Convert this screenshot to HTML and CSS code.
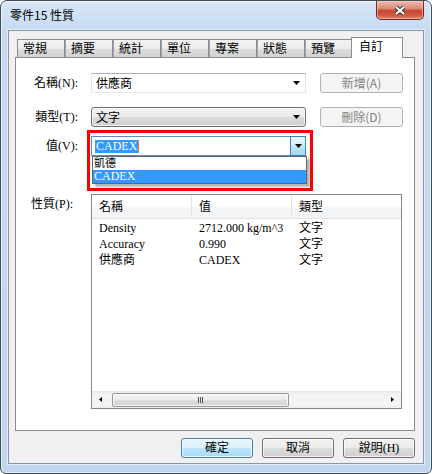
FILE: index.html
```html
<!DOCTYPE html>
<html lang="zh-Hant">
<head>
<meta charset="utf-8">
<title>零件15 性質</title>
<link rel="stylesheet" href="styles.css">
</head>
<body>
<div class="window">
  <div class="titlebar">
    <span class="title">零件15 性質</span>
    <div class="close">
      <svg width="14" height="11" viewBox="0 0 14 11"><path d="M3 2l8 7M11 2l-8 7" stroke="#3f3f3f" stroke-width="4.2" fill="none"/><path d="M3 2l8 7M11 2l-8 7" stroke="#fff" stroke-width="2" fill="none"/></svg>
    </div>
  </div>
  <div class="client">
    <div class="tabs">
      <div class="tab">常規</div>
      <div class="tab">摘要</div>
      <div class="tab">統計</div>
      <div class="tab">單位</div>
      <div class="tab">專案</div>
      <div class="tab">狀態</div>
      <div class="tab">預覽</div>
      <div class="tab active">自訂</div>
    </div>
    <div class="panel">
      <div class="row r1">
        <span class="lbl">名稱(N):</span>
        <div class="combo edit"><span class="ctext">供應商</span><svg class="arr" width="7" height="4" viewBox="0 0 7 4"><path d="M0 0h7L3.5 4z"/></svg></div>
        <div class="btn disabled">新增(A)</div>
      </div>
      <div class="row r2">
        <span class="lbl">類型(T):</span>
        <div class="combo list"><span class="ctext">文字</span><svg class="arr" width="7" height="4" viewBox="0 0 7 4"><path d="M0 0h7L3.5 4z"/></svg></div>
        <div class="btn disabled">刪除(D)</div>
      </div>
      <div class="row r3">
        <span class="lbl">值(V):</span>
        <div class="combo focus">
          <span class="sel">CADEX</span><span class="caret"></span>
          <div class="dbtn"><svg width="7" height="4" viewBox="0 0 7 4"><path d="M0 0h7L3.5 4z"/></svg></div>
          <div class="dropdown">
            <div class="item cjk">凱德</div>
            <div class="item hl">CADEX</div>
          </div>
        </div>
        <div class="redbox"></div>
      </div>
      <div class="props">
        <span class="plbl">性質(P):</span>
        <div class="listview">
          <div class="lvhead">
            <div class="hc">名稱</div>
            <div class="hc">值</div>
            <div class="hc last">類型</div>
          </div>
          <div class="lvbody">
            <div class="lvrow"><span>Density</span><span>2712.000 kg/m^3</span><span>文字</span></div>
            <div class="lvrow"><span>Accuracy</span><span>0.990</span><span>文字</span></div>
            <div class="lvrow"><span>供應商</span><span>CADEX</span><span>文字</span></div>
          </div>
          <div class="hscroll">
            <div class="sarrow"><svg width="3" height="5" viewBox="0 0 3 5"><path d="M3 0v5L0 2.5z"/></svg></div>
            <div class="strack">
              <div class="thumb"><span class="grip"></span><span class="grip"></span><span class="grip"></span></div>
            </div>
            <div class="sarrow"><svg width="3" height="5" viewBox="0 0 3 5"><path d="M0 0v5L3 2.5z"/></svg></div>
          </div>
        </div>
      </div>
    </div>
    <div class="footer">
      <div class="pbtn default">確定</div>
      <div class="pbtn">取消</div>
      <div class="pbtn">說明(H)</div>
    </div>
  </div>
</div>
</body>
</html>
```
FILE: styles.css
```css
* { box-sizing: border-box; }
html, body { margin: 0; padding: 0; }
body {
  width: 432px; height: 474px; overflow: hidden; background: #fff;
  font-family: "Liberation Serif", "Noto Sans CJK TC", serif;
  font-size: 12px; color: #000;
}
.window {
  width: 432px; height: 474px;
  border: 1px solid #424b57;
  border-radius: 7px 7px 6px 6px;
  background: linear-gradient(180deg, #d9e7f7 0, #c5daf2 30px, #c0d6f0 100%);
  box-shadow: inset 0 0 0 1px rgba(255,255,255,0.6);
  display: flex; flex-direction: column;
}
.titlebar {
  height: 29px; flex: none;
  display: flex; justify-content: space-between; align-items: flex-start;
  padding: 0 7px 0 9px;
}
.title {
  font-family: "Noto Sans CJK TC", sans-serif; font-size: 12px;
  line-height: 16px; margin-top: 6px; color: #000;
}
.close {
  width: 48px; height: 19px;
  border: 1px solid #6e2b24; border-top: none;
  border-radius: 0 0 5px 5px;
  background: linear-gradient(180deg, #eab8ab 0, #dc8f7c 40%, #c9462f 55%, #d2583f 80%, #e38a6c 100%);
  box-shadow: inset 0 0 0 1px rgba(255,220,210,0.5);
  display: flex; align-items: center; justify-content: center;
}
.client {
  flex: 1;
  margin: 0 7px 9px;
  border: 1px solid #8896a8;
  box-shadow: 0 0 0 1px rgba(255,255,255,0.55);
  background: #f0f0f0;
  padding: 6px 8px 0 6px;
  display: flex; flex-direction: column;
}
.tabs {
  height: 20px; flex: none;
  display: flex; align-items: flex-end;
  padding-left: 2px;
  position: relative; z-index: 1;
  font-family: "Noto Sans CJK TC", sans-serif;
}
.tab {
  width: 48px; height: 18px;
  border: 1px solid #898c95; border-bottom: none;
  background: linear-gradient(180deg, #f3f3f3 0, #ebebeb 50%, #dddddd 50%, #d2d2d2 100%);
  padding-left: 5px; line-height: 16px; font-size: 12px;
}
.tab + .tab { border-left-color: #a0a3aa; }
.tab.active {
  width: 52px; height: 21px;
  margin: 0 -2px -1px -2px;
  background: #fff;
  border-color: #898c95;
  padding-left: 7px; line-height: 15px;
  position: relative; z-index: 2;
}
.panel {
  width: 400px; height: 374px; flex: none;
  border: 1px solid #898c95;
  background: #fff;
  position: relative;
}
.row {
  display: flex; align-items: center; height: 20px;
  position: relative;
}
.r1 { margin-top: 15px; }
.r2 { margin-top: 14px; }
.r3 { margin-top: 9px; }
.lbl {
  width: 62px; text-align: right; margin-right: 13px;
  line-height: 16px; white-space: nowrap;
}
.combo {
  width: 215px; height: 20px; position: relative;
  display: flex; align-items: center;
  font-family: "Noto Sans CJK TC", sans-serif;
}
.ctext { padding-left: 4px; line-height: 16px; flex: 1; }
.arr { margin-right: 5px; }
.combo.edit {
  border: 1px solid #e2e3ea; border-top-color: #abadb3; border-bottom-color: #e3e9ef;
  background: #fff;
}
.combo.list {
  border: 1px solid #707070; border-radius: 3px;
  background: linear-gradient(180deg, #f2f2f2 0, #ebebeb 50%, #dddddd 50%, #cfcfcf 100%);
  box-shadow: inset 0 0 0 1px rgba(255,255,255,0.7);
}
.combo.focus {
  border: 1px solid #5a8ebd; background: #fff;
  font-family: "Liberation Serif", serif;
}
.sel {
  margin-left: 3px; background: #3399ff; color: #fff;
  line-height: 13px; padding: 0 1px; height: 13px;
}
.caret { width: 1px; height: 13px; background: #e0821f; }
.dbtn {
  position: absolute; right: -1px; top: -1px;
  width: 16px; height: 20px;
  border: 1px solid #3c7fb1;
  background: linear-gradient(180deg, #eaf5fd 0, #d9eefc 45%, #bee6fd 50%, #a7d9f5 100%);
  display: flex; align-items: center; justify-content: center;
}
.dropdown {
  position: absolute; left: 0; top: 19px;
  width: 215px; height: 28px;
  border: 1px solid #646464;
  background: #fff;
  box-shadow: 3px 3px 2px rgba(0,0,0,0.3);
  z-index: 5;
}
.item {
  height: 13px; line-height: 13px; padding-left: 1px;
  font-family: "Liberation Serif", "Noto Sans CJK TC", serif; font-size: 12px;
}
.item.cjk { font-size: 11px; }
.item.hl { background: #3399ff; color: #fff; }
.redbox {
  position: absolute; left: 71px; top: -6px;
  width: 226px; height: 61px;
  border: 3px solid #ff0000;
  z-index: 6;
}
.btn {
  margin-left: 14px; width: 83px; height: 20px;
  border: 1px solid #adb2b5; border-radius: 3px;
  background: #f4f4f4;
  color: #838383;
  text-align: center; line-height: 18px;
  font-family: "Noto Sans CJK TC", sans-serif;
}
.props {
  display: flex; align-items: flex-start;
  margin-top: 38px;
}
.plbl {
  width: 75px; padding-left: 15px; padding-top: 2px;
  line-height: 16px; white-space: nowrap;
}
.listview {
  width: 311px; height: 215px;
  border: 1px solid #828790;
  background: #fff;
  display: flex; flex-direction: column;
}
.lvhead {
  height: 24px; flex: none;
  display: grid; grid-template-columns: 100px 100px 1fr;
  border-bottom: 1px solid #e2e4e7;
  background: linear-gradient(180deg, #ffffff 0, #ffffff 45%, #f6f7f8 55%, #f2f3f5 100%);
  font-family: "Noto Sans CJK TC", sans-serif;
}
.hc {
  padding-left: 7px; line-height: 22px;
  border-right: 1px solid #e5e5e5;
}
.hc.last { border-right: none; }
.lvbody { flex: 1; padding-top: 1px; }
.lvrow {
  display: grid; grid-template-columns: 100px 100px 1fr;
  height: 16px; line-height: 16px;
}
.lvrow span { padding-left: 7px; white-space: nowrap; }
.hscroll {
  height: 17px; flex: none;
  display: flex; align-items: center;
  background: linear-gradient(180deg, #e8e8e8 0, #f3f3f3 20%, #f5f5f5 80%, #eeeeee 100%);
}
.sarrow {
  width: 17px; height: 17px;
  display: flex; align-items: center; justify-content: center;
}
.strack { flex: 1; height: 17px; display: flex; align-items: center; }
.thumb {
  margin-left: 3px; width: 177px; height: 14px;
  border: 1px solid #979797; border-radius: 2px;
  background: linear-gradient(180deg, #f5f5f5 0, #ececec 45%, #dcdcdc 55%, #d4d4d4 100%);
  box-shadow: inset 0 0 0 1px rgba(255,255,255,0.7);
  display: flex; align-items: center; justify-content: center; gap: 1px;
}
.grip { width: 1px; height: 6px; background: #555; }
.footer {
  display: flex; justify-content: flex-end; gap: 9px;
  margin-top: 7px;
}
.pbtn {
  width: 72px; height: 20px;
  border: 1px solid #707070; border-radius: 3px;
  background: linear-gradient(180deg, #f2f2f2 0, #ebebeb 50%, #dddddd 50%, #cfcfcf 100%);
  box-shadow: inset 0 0 0 1px rgba(255,255,255,0.7);
  text-align: center; line-height: 18px;
  font-family: "Liberation Serif", "Noto Sans CJK TC", serif;
}
.pbtn.default {
  border-color: #3c7fb1;
  background: linear-gradient(180deg, #eaf6fd 0, #d9f0fc 50%, #bee6fd 50%, #a7d9f5 100%);
  box-shadow: inset 0 0 0 1px rgba(255,255,255,0.8);
}
```
